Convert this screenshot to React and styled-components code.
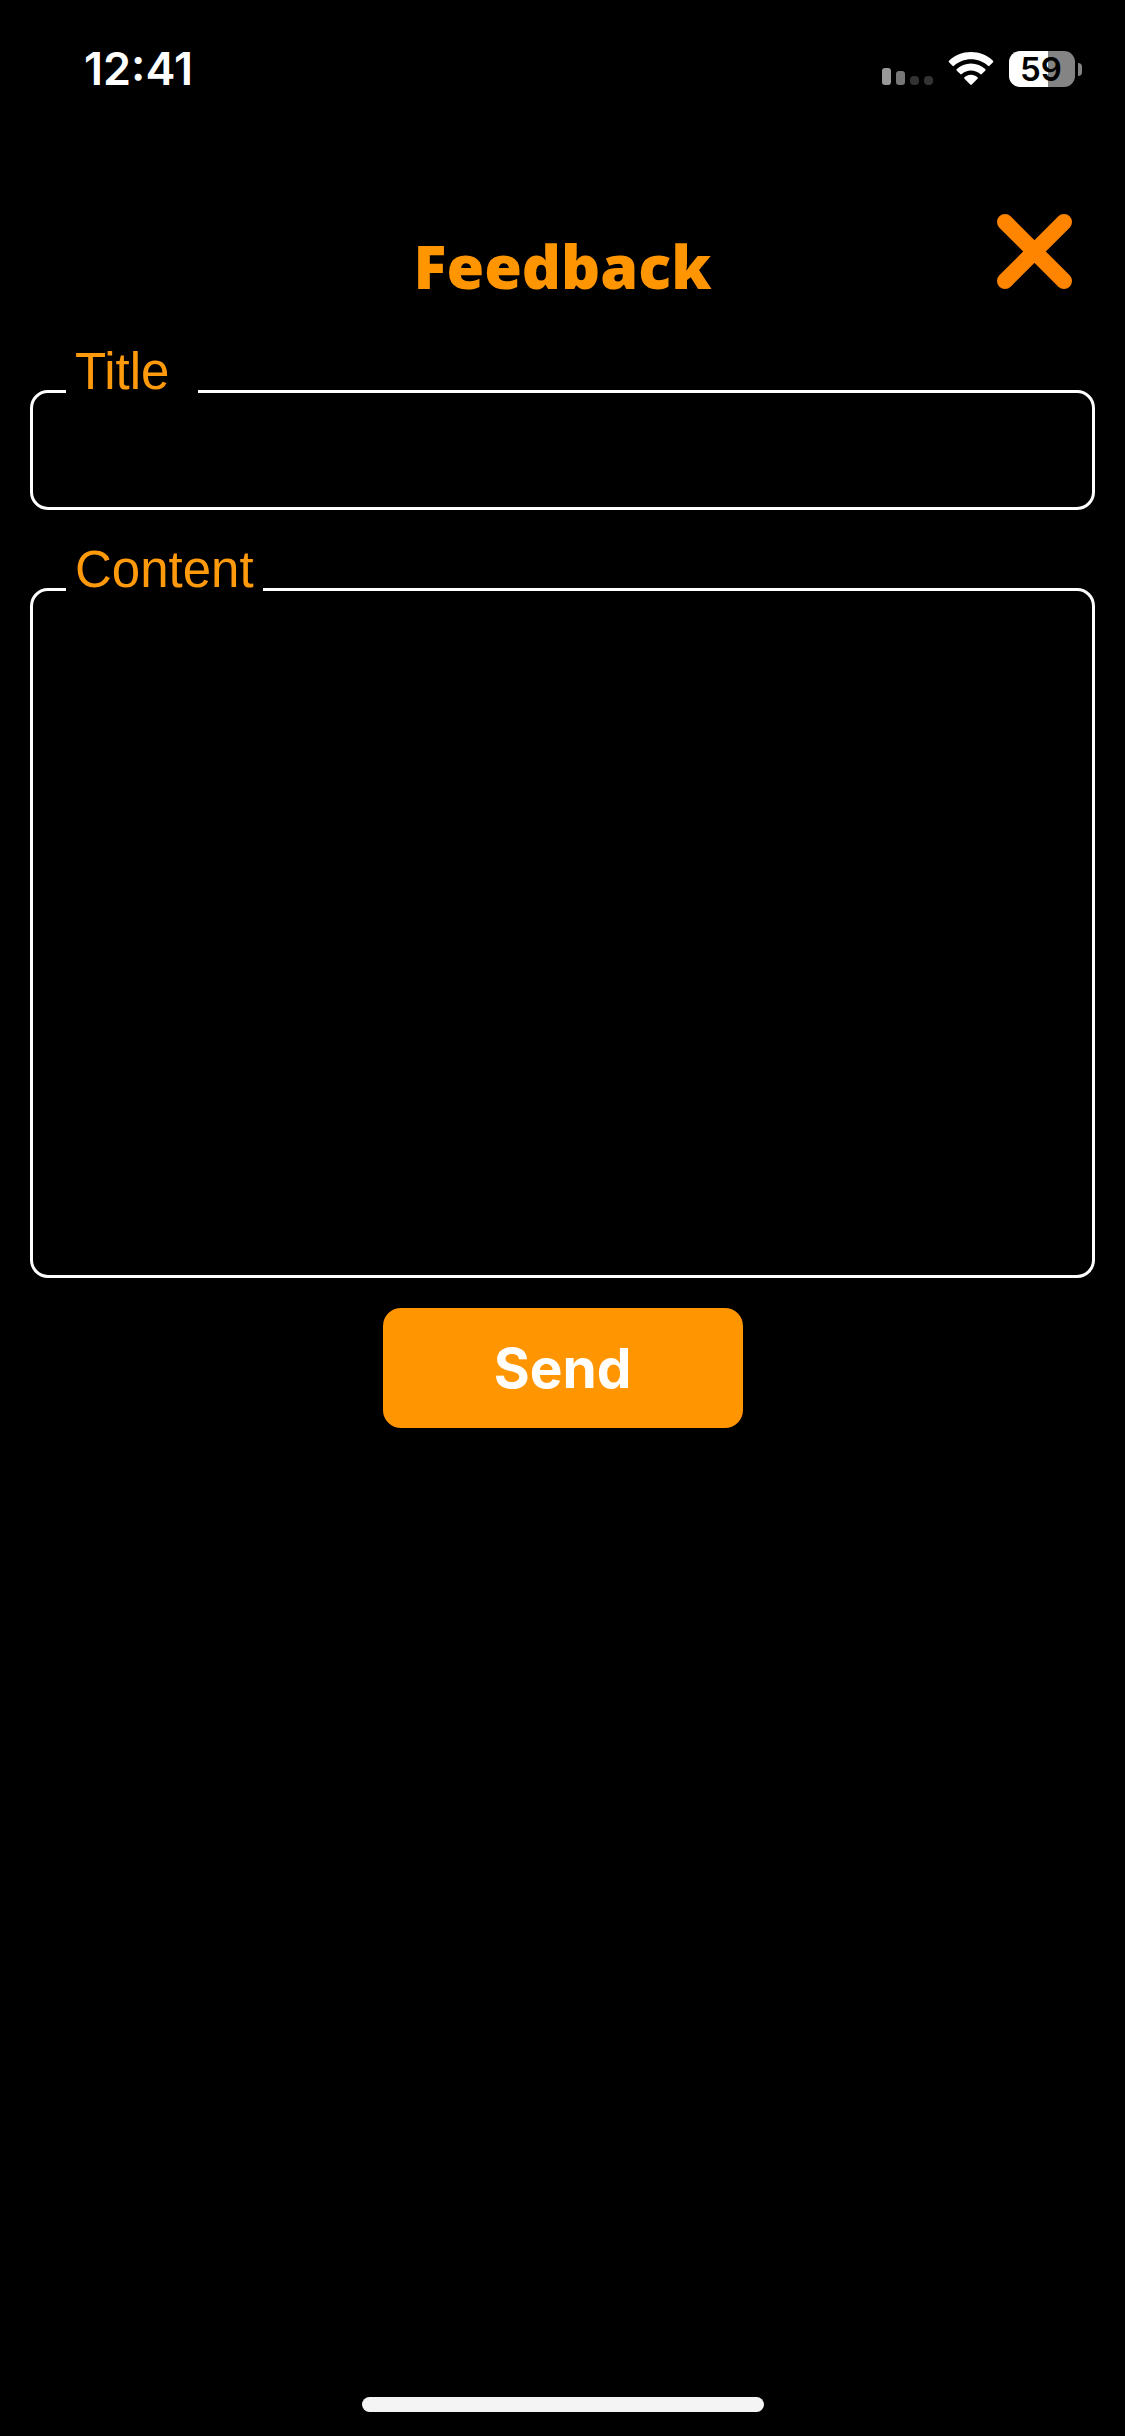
import React from 'react';
import styled, { createGlobalStyle } from 'styled-components';

const GlobalStyle = createGlobalStyle`
  * {
    box-sizing: border-box;
  }

  body {
    margin: 0;
    background: #000;
  }
`;

const Screen = styled.div`
  display: flex;
  flex-direction: column;
  min-height: 100vh;
  background: #000;
  color: #fff;
  font-family: Inter, sans-serif;
`;

const StatusBar = styled.div`
  display: flex;
  align-items: center;
  justify-content: space-between;
  height: 138px;
  padding: 0 43px 0 84px;
`;

const Time = styled.span`
  font-size: 45px;
  font-weight: 600;
  line-height: 56px;
`;

const StatusIcons = styled.div`
  display: flex;
  align-items: center;
  gap: 15px;
`;

const Battery = styled.div`
  display: flex;
  align-items: center;
  gap: 3px;
`;

const BatteryBody = styled.div`
  width: 66px;
  height: 36px;
  padding-right: 2px;
  border-radius: 11px;
  background: linear-gradient(to right, #fff ${props => props.$level}%, #848484 ${props => props.$level}%);
  color: #000;
  font-size: 33px;
  font-weight: 600;
  line-height: 36px;
  text-align: center;
`;

const BatteryTip = styled.div`
  width: 4px;
  height: 13px;
  border-radius: 0 4px 4px 0;
  background: #848484;
`;

const Header = styled.header`
  display: grid;
  grid-template-columns: 1fr auto 1fr;
  align-items: start;
  padding: 76px 52px 36px;
`;

const Heading = styled.h1`
  grid-column: 2;
  margin: 0;
  padding-top: 12px;
  color: #ff9500;
  font-family: 'Open Sans', sans-serif;
  font-size: 61px;
  font-weight: 800;
  line-height: 80px;
`;

const CloseButton = styled.button`
  display: flex;
  justify-self: end;
  padding: 0;
  border: 0;
  background: none;
  color: #ff8400;
  cursor: pointer;
`;

const Form = styled.form`
  display: flex;
  flex-direction: column;
  gap: 30px;
  padding: 0 30px;
`;

const Field = styled.div`
  display: flex;
  flex-direction: column;
`;

// sits over the top border of the box and hides that part of the line
const Label = styled.label`
  position: relative;
  z-index: 1;
  align-self: flex-start;
  min-width: 132px;
  margin: 0 0 -12px 36px;
  padding: 0 9px;
  background: #000;
  color: #ff9a0c;
  font-family: 'Liberation Sans', sans-serif;
  font-size: 51px;
  line-height: 60px;
`;

const Input = styled.input`
  width: 100%;
  height: 120px;
  padding: 20px 30px;
  border: 3px solid #fff;
  border-radius: 18px;
  outline: none;
  background: #000;
  color: #fff;
  font-family: 'Liberation Sans', sans-serif;
  font-size: 51px;
`;

const TextArea = styled(Input)`
  display: block;
  height: 690px;
  resize: none;
`;

const SendButton = styled.button`
  align-self: center;
  width: 360px;
  height: 120px;
  border: 0;
  border-radius: 18px;
  background: #ff9500;
  color: #fffefa;
  font-family: Inter, sans-serif;
  font-size: 55px;
  font-weight: 700;
  cursor: pointer;
`;

const HomeIndicator = styled.div`
  align-self: center;
  width: 402px;
  height: 15px;
  margin: auto 0 24px;
  border-radius: 8px;
  background: #f4f4f4;
`;

const SignalIcon = () => (
  <svg width="51" height="34" viewBox="0 0 51 34">
    <rect x="0" y="16" width="9" height="17" rx="3" fill="#999" />
    <rect x="14" y="19" width="9" height="14" rx="3" fill="#777" />
    <rect x="28" y="24" width="9" height="9" rx="4" fill="#333" />
    <rect x="42" y="24" width="9" height="9" rx="4" fill="#333" />
  </svg>
);

const WifiIcon = () => (
  <svg width="46" height="34" viewBox="0 0 46 34" fill="#fff">
    <path d="M23 0C31.500 0 39.200 3.300 45 8.700Q45.800 9.500 45 10.300L41.500 13.800Q40.800 14.500 40 13.800C35.500 9.700 29.500 7.300 23 7.300S10.500 9.700 6 13.800Q5.200 14.500 4.500 13.800L1 10.300Q.2 9.500 1 8.700C6.800 3.300 14.500 0 23 0Z" />
    <path d="M23 11.500C28.500 11.500 33.400 13.600 37.200 17.100Q38 17.900 37.200 18.700L33.700 22.100Q33 22.800 32.200 22.100C29.700 19.900 26.500 18.600 23 18.600S16.300 19.900 13.800 22.100Q13 22.800 12.300 22.100L8.800 18.700Q8 17.900 8.800 17.100C12.600 13.600 17.500 11.500 23 11.500Z" />
    <path d="M23 22.800C25.600 22.800 27.800 23.700 29.500 25.200Q30.300 26 29.500 26.800L23.800 32.500Q23 33.200 22.200 32.500L16.500 26.800Q15.700 26 16.500 25.200C18.200 23.700 20.400 22.800 23 22.800Z" />
  </svg>
);

const CloseIcon = () => (
  <svg width="76" height="76" viewBox="0 0 76 76" stroke="currentColor" strokeWidth="16" strokeLinecap="round">
    <path d="M8 8L67 67M67 8L8 67" />
  </svg>
);

class App extends React.Component {
  render() {
    return (
      <Screen>
        <GlobalStyle />
        <StatusBar>
          <Time>12:41</Time>
          <StatusIcons>
            <SignalIcon />
            <WifiIcon />
            <Battery>
              <BatteryBody $level={59}>59</BatteryBody>
              <BatteryTip />
            </Battery>
          </StatusIcons>
        </StatusBar>
        <Header>
          <Heading>Feedback</Heading>
          <CloseButton type="button" aria-label="Close">
            <CloseIcon />
          </CloseButton>
        </Header>
        <Form onSubmit={e => e.preventDefault()}>
          <Field>
            <Label htmlFor="title">Title</Label>
            <Input id="title" type="text" />
          </Field>
          <Field>
            <Label htmlFor="content">Content</Label>
            <TextArea as="textarea" id="content" />
          </Field>
          <SendButton type="submit">Send</SendButton>
        </Form>
        <HomeIndicator />
      </Screen>
    )
  }
};

export default App;
